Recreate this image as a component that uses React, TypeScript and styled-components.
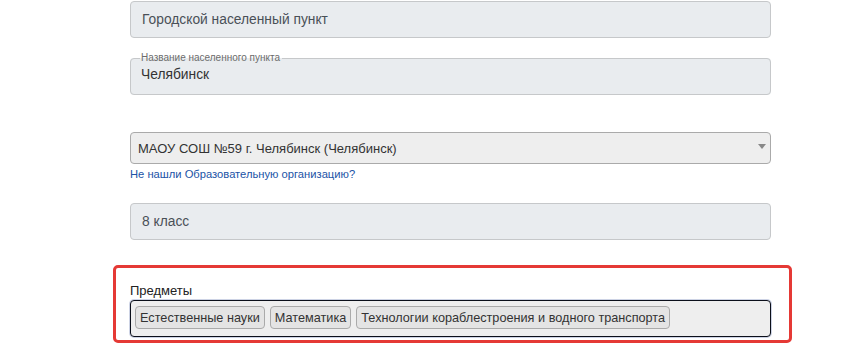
import styled, {createGlobalStyle} from "styled-components";

const GlobalStyle = createGlobalStyle`
  body {
    margin: 0;
    background: #fff;
    font-family: "Liberation Sans", Arial, sans-serif;
  }
`;

const Page = styled.div`
  display: flex;
  flex-direction: column;
  width: 641px;
  padding: 1px 0 0 130px;
`;

const Field = styled.div<{$mt?: number}>`
  display: flex;
  align-items: center;
  height: 37px;
  box-sizing: border-box;
  margin-top: ${p => p.$mt ?? 0}px;
  padding: 0 11px;
  background: #e9ecef;
  border: 1px solid #c6c8ca;
  border-radius: 4px;
  font-size: 13.8px;
  color: #495057;
`;

const LabelledField = styled.fieldset`
  margin: 15px 0 0;
  height: 42px;
  box-sizing: border-box;
  padding: 0 10px 0 10px;
  background: #e9ecef;
  border: 1px solid #c6c8ca;
  border-radius: 4px;
  font-size: 13.8px;
  color: #333;
  min-width: 0;
`;

const Legend = styled.legend`
  margin-left: -1px;
  padding: 0 2px 0 1px;
  font-size: 10px;
  color: #6c6c6c;
  line-height: 10px;
`;

const FieldValue = styled.div`
  line-height: 16px;
  margin-top: 4px;
`;

const Select = styled.div`
  position: relative;
  display: flex;
  align-items: center;
  margin-top: 37px;
  height: 32px;
  box-sizing: border-box;
  padding: 0 7px;
  background: #eeeeee;
  border: 1px solid #aaa;
  border-radius: 4px;
  font-size: 13px;
  color: #333;
`;

const Caret = styled.span`
  position: absolute;
  right: 4px;
  top: 11px;
  width: 0;
  height: 0;
  border-left: 4px solid transparent;
  border-right: 4px solid transparent;
  border-top: 5px solid #888;
`;

const HelpLink = styled.a`
  margin-top: 3px;
  font-size: 11.2px;
  line-height: 14px;
  color: #2053a6;
  text-decoration: none;
`;

const Highlight = styled.div`
  margin: 25px 0 0 -17px;
  width: 679px;
  box-sizing: border-box;
  padding: 15px 18px 3px 14px;
  border: 3px solid #e53935;
  border-radius: 5px;
`;

const GroupLabel = styled.div`
  font-size: 13px;
  line-height: 16px;
  margin-bottom: 1px;
  color: #222;
`;

const MultiBox = styled.div`
  display: flex;
  flex-wrap: wrap;
  gap: 5px;
  height: 37px;
  box-sizing: border-box;
  padding: 5px 4px;
  background: #eeeeee;
  border: 1px solid #0b0f1a;
  box-shadow: 0 0 0 1px rgba(90, 110, 170, 0.3);
  border-radius: 4px;
`;

const Chip = styled.span`
  display: flex;
  align-items: center;
  height: 23px;
  box-sizing: border-box;
  padding: 0 4px;
  background: #e4e4e4;
  border: 1px solid #aaa;
  border-radius: 4px;
  font-size: 12.7px;
  color: #333;
`;

const subjects = ["Естественные науки", "Математика", "Технологии кораблестроения и водного транспорта"];

export default function App() {
    return (
        <>
            <GlobalStyle/>
            <Page>
                <Field>Городской населенный пункт</Field>
                <LabelledField>
                    <Legend>Название населенного пункта</Legend>
                    <FieldValue>Челябинск</FieldValue>
                </LabelledField>
                <Select>
                    МАОУ СОШ №59 г. Челябинск (Челябинск)
                    <Caret/>
                </Select>
                <HelpLink href="#">Не нашли Образовательную организацию?</HelpLink>
                <Field $mt={22}>8 класс</Field>
                <Highlight>
                    <GroupLabel>Предметы</GroupLabel>
                    <MultiBox>
                        {subjects.map(s => <Chip key={s}>{s}</Chip>)}
                    </MultiBox>
                </Highlight>
            </Page>
        </>
    );
}
